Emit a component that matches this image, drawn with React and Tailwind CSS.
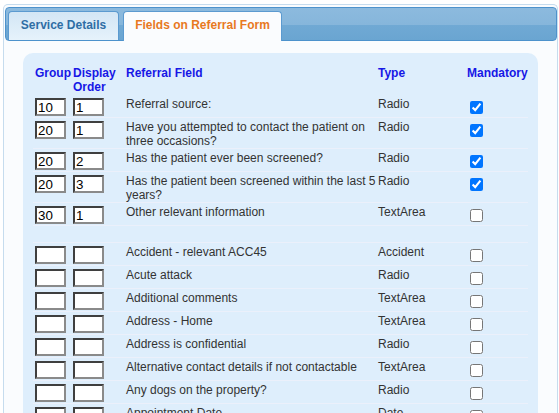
import React from 'react';

const fields = [
  { group: '10', order: '1', name: 'Referral source:', type: 'Radio', mandatory: true },
  { group: '20', order: '1', name: 'Have you attempted to contact the patient on three occasions?', type: 'Radio', mandatory: true },
  { group: '20', order: '2', name: 'Has the patient ever been screened?', type: 'Radio', mandatory: true },
  { group: '20', order: '3', name: 'Has the patient been screened within the last 5 years?', type: 'Radio', mandatory: true },
  { group: '30', order: '1', name: 'Other relevant information', type: 'TextArea', mandatory: false },
  { spacer: true },
  { group: '', order: '', name: 'Accident - relevant ACC45', type: 'Accident', mandatory: false },
  { group: '', order: '', name: 'Acute attack', type: 'Radio', mandatory: false },
  { group: '', order: '', name: 'Additional comments', type: 'TextArea', mandatory: false },
  { group: '', order: '', name: 'Address - Home', type: 'TextArea', mandatory: false },
  { group: '', order: '', name: 'Address is confidential', type: 'Radio', mandatory: false },
  { group: '', order: '', name: 'Alternative contact details if not contactable', type: 'TextArea', mandatory: false },
  { group: '', order: '', name: 'Any dogs on the property?', type: 'Radio', mandatory: false },
  { group: '', order: '', name: 'Appointment Date', type: 'Date', mandatory: false },
  { group: '', order: '', name: 'Appointment Time', type: 'Text', mandatory: false },
];

function NumberBox({ value }) {
  return (
    <input
      type="text"
      defaultValue={value}
      className="block w-[31px] h-[18px] px-[1px] bg-white text-black text-[13.33px] leading-[14px] border-2 border-[#8a8a8a] border-t-[#3f3f3f] border-l-[#3f3f3f] outline-none"
    />
  );
}

function App() {
  return (
    <div className="min-h-screen bg-white pl-[3px] pt-[4px] font-['Liberation_Sans',Arial,sans-serif] overflow-hidden">
      <div className="w-[555px] min-h-[420px] border-l border-t border-r border-[#c6dcee] rounded-tl-[5px] rounded-tr-[5px] bg-[#fafcfe] pt-[2px] pl-[1px]">
        {/* tab strip */}
        <div className="h-[34px] w-[552px] flex items-end gap-[4px] pl-[2px] rounded-[4px] border border-[#4d92cc] bg-[linear-gradient(to_bottom,#8cbade_0%,#86b6db_52%,#70a9d4_54%,#6aa5d1_100%)]">
          <div className="w-[111px] h-[29px] flex items-center justify-center pb-[2px] rounded-t-[4px] border border-b-0 border-[#5b9ad0] bg-[linear-gradient(to_bottom,#d3e6f5_0%,#dcecf8_50%,#e6f2fb_100%)] text-[12px] font-bold text-[#2f6ea5]">
            Service Details
          </div>
          <div className="w-[159px] h-[30px] -mb-[1px] flex items-center justify-center pb-[3px] rounded-t-[4px] border border-b-0 border-[#5b9ad0] bg-[#fafcfe] text-[12px] font-bold text-[#e8791f]">
            Fields on Referral Form
          </div>
        </div>

        {/* fields box */}
        <div className="ml-[18px] mt-[12px] w-[515px] rounded-[10px] bg-[#deeefc] pl-[10px] pt-[10px] pb-[20px]">
          <table className="table-fixed w-[495px] border-collapse text-[12px] text-[#333]">
            <colgroup>
              <col className="w-[38px]" />
              <col className="w-[53px]" />
              <col className="w-[253px]" />
              <col className="w-[88px]" />
              <col className="w-[63px]" />
            </colgroup>
            <thead>
              <tr className="text-left align-top font-bold text-[#1717e6] leading-[14px]">
                <th className="pl-[2px] pt-[3px] pb-[1px] font-bold">Group</th>
                <th className="pl-[2px] pt-[3px] pb-[1px] font-bold">Display Order</th>
                <th className="pl-[2px] pt-[3px] pb-[1px] font-bold">Referral Field</th>
                <th className="pl-[1px] pt-[3px] pb-[1px] font-bold">Type</th>
                <th className="pl-[2px] pt-[3px] pb-[1px] font-bold whitespace-nowrap">Mandatory</th>
              </tr>
            </thead>
            <tbody>
              {fields.map((f, i) =>
                f.spacer ? (
                  <tr key={i} className="border-b border-[#ebf0fb]">
                    <td colSpan={5} className="h-[17px] p-0"></td>
                  </tr>
                ) : (
                  <tr key={i} className="align-top border-b border-[#ebf0fb]">
                    <td className="pl-[2px] pt-[3px] pb-[1px]">
                      <NumberBox value={f.group} />
                    </td>
                    <td className="pl-[2px] pt-[3px] pb-[1px]">
                      <NumberBox value={f.order} />
                    </td>
                    <td className="pl-[2px] pt-[2px] leading-[14px]">{f.name}</td>
                    <td className="pl-[1px] pt-[2px] leading-[14px]">{f.type}</td>
                    <td className="pl-[2px]">
                      <input
                        type="checkbox"
                        defaultChecked={f.mandatory}
                        className="block m-0 mt-[6px] ml-[3px] w-[13px] h-[13px]"
                      />
                    </td>
                  </tr>
                )
              )}
            </tbody>
          </table>
        </div>
      </div>
    </div>
  );
}

export default App;
